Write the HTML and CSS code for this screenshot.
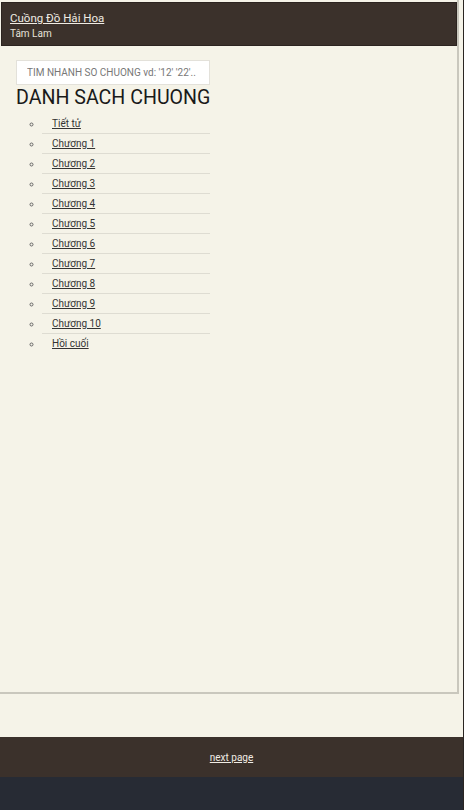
FILE: index.html
```html
<!DOCTYPE html>
<html lang="vi">
<head>
<meta charset="utf-8">
<title>Cuồng Đồ Hải Hoa</title>
<link rel="stylesheet" href="styles.css">
</head>
<body>
<div class="page">
  <div class="viewport">
    <header class="top">
      <a class="title" href="#">Cuồng Đồ Hải Hoa</a>
      <div class="author">Tâm Lam</div>
    </header>
    <main class="content">
      <input class="search" type="text" placeholder="TIM NHANH SO CHUONG vd: '12' '22'..">
      <h1 class="heading">DANH SACH CHUONG</h1>
      <ul class="chapters">
        <li><a href="#">Tiết tử</a></li>
        <li><a href="#">Chương 1</a></li>
        <li><a href="#">Chương 2</a></li>
        <li><a href="#">Chương 3</a></li>
        <li><a href="#">Chương 4</a></li>
        <li><a href="#">Chương 5</a></li>
        <li><a href="#">Chương 6</a></li>
        <li><a href="#">Chương 7</a></li>
        <li><a href="#">Chương 8</a></li>
        <li><a href="#">Chương 9</a></li>
        <li><a href="#">Chương 10</a></li>
        <li><a href="#">Hồi cuối</a></li>
      </ul>
    </main>
  </div>
  <div class="spacer"></div>
  <footer class="bottom">
    <a href="#">next page</a>
  </footer>
  <div class="base"></div>
</div>
</body>
</html>
```

FILE: styles.css
```css
html, body {
  margin: 0;
  padding: 0;
  height: 100%;
}
body {
  background: #f5f3e8;
  font-family: Roboto, "Noto Sans", "Liberation Sans", sans-serif;
  color: #222;
  overflow: hidden;
}
.page {
  display: flex;
  flex-direction: column;
  height: 810px;
  border-right: 1px solid #2a2522;
  box-sizing: border-box;
}
.viewport {
  height: 694px;
  width: 459px;
  box-sizing: border-box;
  border-right: 2px solid #c9c7bd;
  border-bottom: 2px solid #c9c7bd;
  padding-top: 2px;
  display: flex;
  flex-direction: column;
}
.top {
  margin-left: 1px;
  height: 44px;
  box-sizing: border-box;
  background: #3b312b;
  border: 1px solid #2c2420;
  padding: 7px 8px 0;
  display: flex;
  flex-direction: column;
}
.title {
  color: #f0ece4;
  font-size: 11.5px;
  line-height: 16px;
  text-decoration: underline;
}
.author {
  color: #e6e2da;
  font-size: 10px;
  line-height: 14px;
  margin-top: 1px;
}
.content {
  padding: 14px 0 0 16px;
  width: 194px;
  display: flex;
  flex-direction: column;
}
.search {
  height: 25px;
  box-sizing: border-box;
  border: 1px solid #e3e1da;
  background: #fff;
  padding: 0 0 0 10px;
  font-family: Roboto, "Noto Sans", sans-serif;
  font-size: 10px;
  outline: none;
  margin: 0;
}
.search::placeholder {
  color: #777;
}
.heading {
  margin: 1px 0 0;
  font-size: 19.6px;
  line-height: 24px;
  font-weight: 400;
  color: #1a1a1a;
  white-space: nowrap;
}
.chapters {
  list-style: circle;
  margin: 4px 0 0;
  padding: 0 0 0 26px;
  font-size: 10px;
  color: #555;
}
.chapters li {
  height: 20px;
  line-height: 20px;
  box-sizing: border-box;
  border-bottom: 1px solid #dedcd2;
  padding-left: 10px;
}
.chapters li:last-child {
  border-bottom: none;
}
.chapters li::marker {
  font-size: 9px;
  color: #666;
}
.chapters a {
  color: #333;
  text-decoration: underline;
}
.spacer {
  height: 43px;
}
.bottom {
  height: 40px;
  background: #3b312b;
  display: flex;
  align-items: center;
  justify-content: center;
}
.bottom a {
  color: #f0ece4;
  font-family: Roboto, "Liberation Sans", sans-serif;
  font-size: 10px;
  text-decoration: underline;
}
.base {
  flex: 1;
  background: #272b34;
}
```
